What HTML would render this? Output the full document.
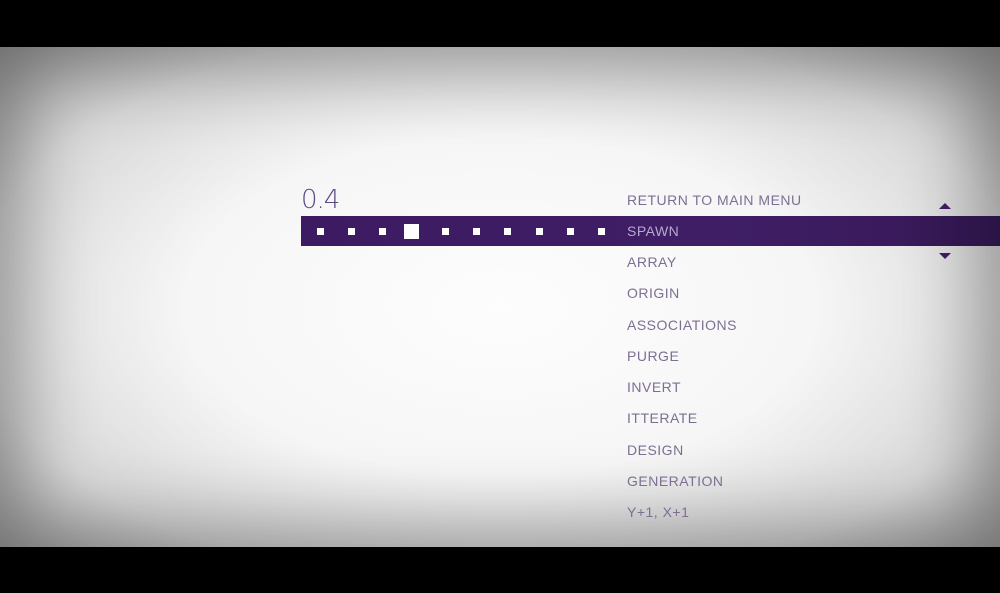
<!DOCTYPE html>
<html><head><style>
html,body{margin:0;padding:0;width:1000px;height:593px;overflow:hidden;background:#000;}
.scr{position:absolute;left:0;top:47px;width:1000px;height:500px;background:radial-gradient(ellipse 70% 75% at 50% 52%,#fdfdfd 0%,#f6f6f6 45%,#d8d8d8 75%,#a0a0a0 100%);overflow:hidden;}
.vig{position:absolute;inset:0;box-shadow:inset 0 0 70px 25px rgba(0,0,0,0.3);}
.bar{position:absolute;left:301px;top:169px;width:699px;height:30px;background:linear-gradient(90deg,#3d1b62 0%,#3f1e66 60%,#3a1a5c 85%,#2a1445 100%);}
.sq{position:absolute;background:#fff;width:7px;height:7px;top:12px;}
.big{width:15px;height:15px;top:8px;}
.num{position:absolute;left:301px;top:138px;font:200 26px "DejaVu Sans","Liberation Sans",sans-serif;color:#5e4a80;letter-spacing:-1px;}
.m{position:absolute;left:627px;font:14px "Liberation Sans",sans-serif;letter-spacing:0.5px;color:#7d6f92;}
.sel{color:#b8a9d0;}
.tri{position:absolute;width:0;height:0;border-left:6px solid transparent;border-right:6px solid transparent;}
</style></head><body>
<div class="scr">
<div class="vig"></div>
<div class="num">0.4</div>
<div class="bar">
<div class="sq" style="left:16px"></div>
<div class="sq" style="left:47px"></div>
<div class="sq" style="left:78px"></div>
<div class="sq big" style="left:103px"></div>
<div class="sq" style="left:141px"></div>
<div class="sq" style="left:172px"></div>
<div class="sq" style="left:203px"></div>
<div class="sq" style="left:235px"></div>
<div class="sq" style="left:266px"></div>
<div class="sq" style="left:297px"></div>
</div>
<div class="tri" style="left:939px;top:156px;border-bottom:6px solid #3d1b62"></div>
<div class="tri" style="left:939px;top:206px;border-top:6px solid #3d1b62"></div>
<div class="m" style="top:145px">RETURN TO MAIN MENU</div>
<div class="m sel" style="top:176px">SPAWN</div>
<div class="m" style="top:207px">ARRAY</div>
<div class="m" style="top:238px">ORIGIN</div>
<div class="m" style="top:270px">ASSOCIATIONS</div>
<div class="m" style="top:301px">PURGE</div>
<div class="m" style="top:332px">INVERT</div>
<div class="m" style="top:363px">ITTERATE</div>
<div class="m" style="top:395px">DESIGN</div>
<div class="m" style="top:426px">GENERATION</div>
<div class="m" style="top:457px">Y+1, X+1</div>
</div>
</body></html>
